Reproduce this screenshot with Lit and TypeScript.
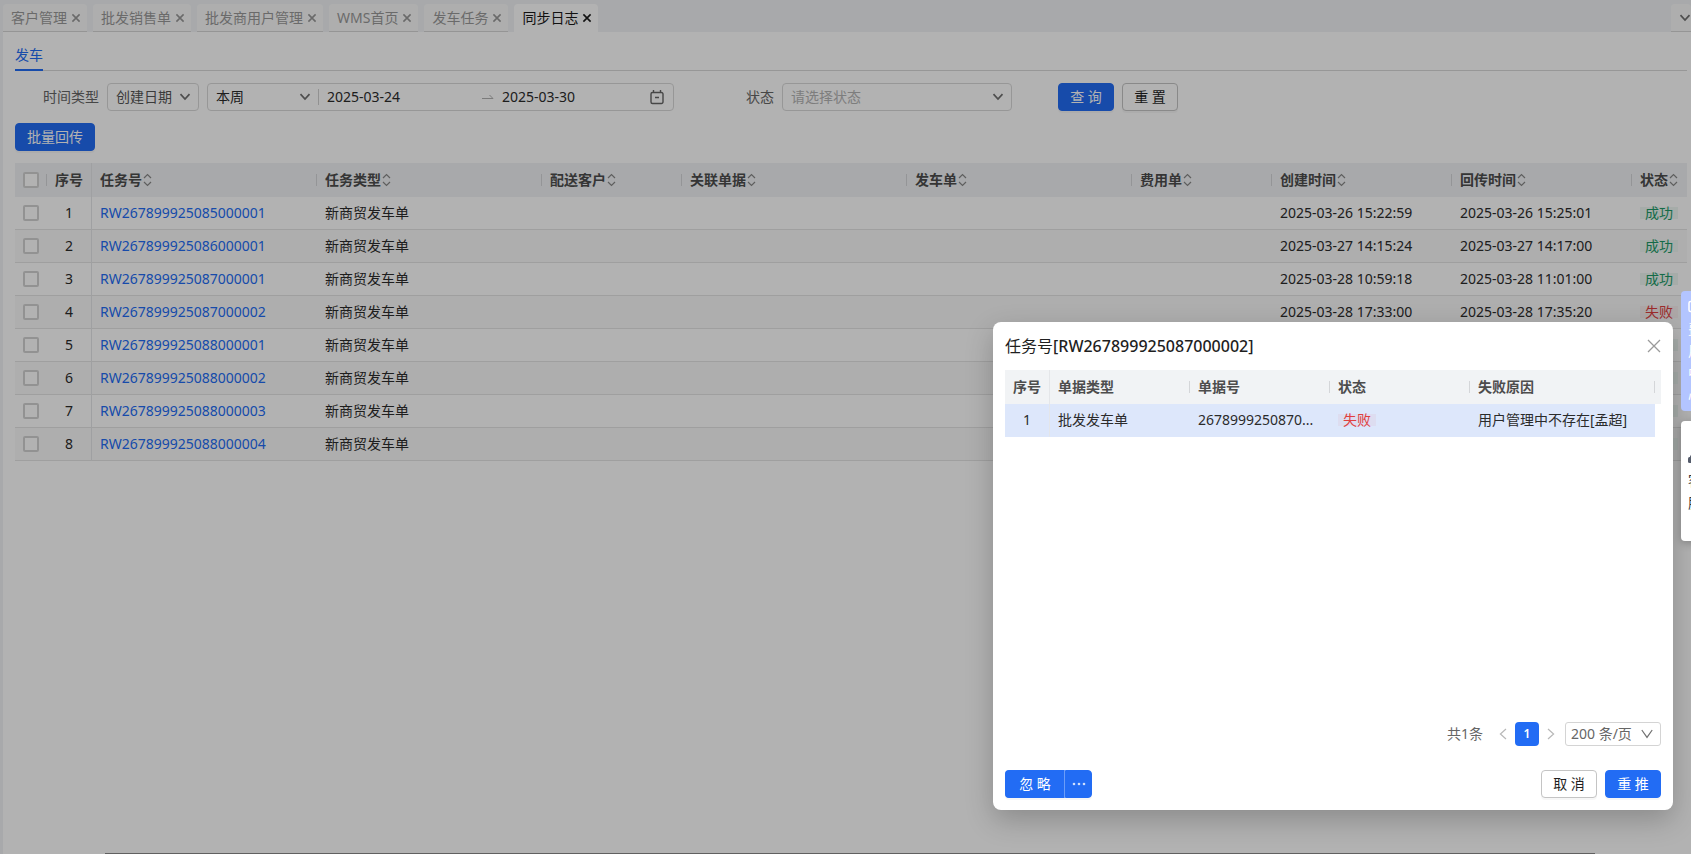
import { LitElement, html, svg, css, nothing } from "lit";
import { customElement, state } from "lit/decorators.js";
import { classMap } from "lit/directives/class-map.js";

interface Task {
  no: string;
  created: string;
  returned: string;
  ok: boolean;
}

const TABS = ["客户管理", "批发销售单", "批发商用户管理", "WMS首页", "发车任务", "同步日志"];

const COLUMNS = ["任务号", "任务类型", "配送客户", "关联单据", "发车单", "费用单", "创建时间", "回传时间", "状态"];

const TASKS: Task[] = [
  { no: "RW267899925085000001", created: "2025-03-26 15:22:59", returned: "2025-03-26 15:25:01", ok: true },
  { no: "RW267899925086000001", created: "2025-03-27 14:15:24", returned: "2025-03-27 14:17:00", ok: true },
  { no: "RW267899925087000001", created: "2025-03-28 10:59:18", returned: "2025-03-28 11:01:00", ok: true },
  { no: "RW267899925087000002", created: "2025-03-28 17:33:00", returned: "2025-03-28 17:35:20", ok: false },
  { no: "RW267899925088000001", created: "", returned: "", ok: true },
  { no: "RW267899925088000002", created: "", returned: "", ok: true },
  { no: "RW267899925088000003", created: "", returned: "", ok: true },
  { no: "RW267899925088000004", created: "", returned: "", ok: true },
];

const chevron = html`<svg class="chevron" viewBox="0 0 12 8" width="12" height="8" aria-hidden="true">
  ${svg`<path d="M1.5 1.2 6 6 10.5 1.2" fill="none" stroke="currentColor" stroke-width="1.7" />`}
</svg>`;

const thinChevron = html`<svg class="chevron" viewBox="0 0 12 10" width="12" height="10" aria-hidden="true">
  ${svg`<path d="M.8 1 6 8.4 11.2 1" fill="none" stroke="currentColor" stroke-width="1.2" />`}
</svg>`;

const cross = html`<svg viewBox="0 0 10 10" width="10" height="10" aria-hidden="true">
  ${svg`<path d="M1.4 1.4 8.6 8.6M8.6 1.4 1.4 8.6" fill="none" stroke="currentColor" stroke-width="1.6" />`}
</svg>`;

const sorter = html`<svg class="sorter" viewBox="0 0 9 14" width="9" height="14" aria-hidden="true">
  ${svg`<path d="M1 5 4.5 1.5 8 5M1 9 4.5 12.5 8 9" fill="none" stroke="currentColor" stroke-width="1.2" />`}
</svg>`;

const shared = css`
  * { box-sizing: border-box; }
  button, input, select { font: inherit; color: inherit; margin: 0; }
  button { cursor: pointer; padding: 0; }
  .btn {
    height: 28px;
    min-width: 56px;
    padding: 0 11px;
    border: 1px solid #c4c4c4;
    border-radius: 4px;
    background: #fff;
    color: #1f1f1f;
    line-height: 20px;
    white-space: nowrap;
    box-shadow: 0 2px 0 rgba(0, 0, 0, 0.03);
  }
  .btn.primary { background: #226cf4; border-color: #226cf4; color: #fff; }
  .field { display: grid; align-items: center; }
  .field > * { grid-area: 1 / 1; }
  .field select {
    appearance: none;
    width: 100%;
    height: 100%;
    border: 0;
    background: none;
    outline: none;
  }
  .chevron { justify-self: end; pointer-events: none; color: #707070; }
  table { border-collapse: separate; border-spacing: 0; table-layout: fixed; width: 100%; }
  th, td { padding: 0 8px; text-align: left; white-space: nowrap; overflow: hidden; }
  th {
    height: 34px;
    font-weight: 600;
    color: #4d4d4d;
    background: #f1f3f5 linear-gradient(#d4d6d9, #d4d6d9) no-repeat right center / 1px 12px;
  }
  td { height: 33px; border-bottom: 1px solid #e4e4e4; color: #2b2b2b; text-overflow: ellipsis; }
  .num { text-align: center; }
  th.num, td.num { border-right: 1px solid #e4e6e9; background-image: none; }
  .tag { display: inline-block; height: 12px; line-height: 12px; padding: 0 5px; color: #1d9a68; background: #eef7f3; }
  .tag.fail { color: #e0403f; background: rgba(224, 64, 63, 0.06); }
`;

@customElement("sync-dialog")
export class SyncDialog extends LitElement {
  static styles = [
    shared,
    css`
      :host {
        display: flex;
        flex-direction: column;
        width: 680px;
        padding: 0 12px 12px;
        border-radius: 8px;
        background: #fff;
        box-shadow: 0 10px 28px rgba(0, 0, 0, 0.22);
      }
      header { display: flex; align-items: center; justify-content: space-between; height: 48px; }
      h2 { margin: 0; font-size: 16px; line-height: 24px; font-weight: 400; color: #1f1f1f; }
      h2 b { font-weight: 500; }
      .close { display: flex; border: 0; background: none; color: #9a9a9a; }
      .scroll { min-height: 340px; background: linear-gradient(#f1f3f5, #f1f3f5) no-repeat 0 0 / 100% 34px; padding-right: 6px; }
      tbody td { background: #dde7fb; border-bottom-color: #dde7fb; }
      .pager { display: flex; align-items: center; justify-content: flex-end; height: 24px; margin-top: 12px; color: #666; }
      .arrow { display: flex; justify-content: center; width: 24px; border: 0; background: none; color: #b8b8b8; }
      .total { margin-right: 8px; }
      .page { width: 24px; height: 24px; border: 0; border-radius: 4px; background: #226cf4; color: #fff; font-size: 12px; font-weight: 600; line-height: 24px; }
      .size { width: 96px; height: 24px; margin-left: 2px; border: 1px solid #d4d4d4; border-radius: 3px; }
      .size select { padding: 0 5px; }
      .size .chevron { margin-right: 7px; }
      footer { display: flex; align-items: center; gap: 8px; margin-top: 24px; }
      .split { display: flex; margin-right: auto; }
      .split .btn:first-child { width: 60px; border-radius: 4px 0 0 4px; border-right-color: #6b9df8; }
      .split .more { display: grid; place-items: center; min-width: 0; width: 27px; padding: 0; border-radius: 0 4px 4px 0; }
    `,
  ];

  render() {
    return html`
      <header>
        <h2>任务号<b>[RW267899925087000002]</b></h2>
        <button class="close" aria-label="关闭">
          <svg viewBox="0 0 14 14" width="14" height="14">
            <path d="M1 1 13 13M13 1 1 13" fill="none" stroke="currentColor" stroke-width="1.3" />
          </svg>
        </button>
      </header>
      <div class="scroll">
        <table>
          <colgroup>
            <col width="45" /><col width="140" /><col width="140" /><col width="140" /><col />
          </colgroup>
          <thead>
            <tr>
              <th class="num">序号</th><th>单据类型</th><th>单据号</th><th>状态</th><th>失败原因</th>
            </tr>
          </thead>
          <tbody>
            <tr>
              <td class="num">1</td>
              <td>批发发车单</td>
              <td>2678999250870...</td>
              <td><span class="tag fail">失败</span></td>
              <td>用户管理中不存在[孟超]</td>
            </tr>
          </tbody>
        </table>
      </div>
      <div class="pager">
        <span class="total">共1条</span>
        <button class="arrow" aria-label="上一页">
          <svg viewBox="0 0 8 12" width="8" height="12"><path d="M7 1 1.4 6 7 11" fill="none" stroke="currentColor" stroke-width="1.2" /></svg>
        </button>
        <button class="page">1</button>
        <button class="arrow" aria-label="下一页">
          <svg viewBox="0 0 8 12" width="8" height="12"><path d="M1 1 6.6 6 1 11" fill="none" stroke="currentColor" stroke-width="1.2" /></svg>
        </button>
        <div class="field size">
          <select aria-label="每页条数"><option>200 条/页</option></select>
          ${thinChevron}
        </div>
      </div>
      <footer>
        <div class="split">
          <button class="btn primary">忽 略</button>
          <button class="btn primary more" aria-label="更多">
            <svg viewBox="0 0 14 4" width="14" height="4" fill="#cfdffd">
              <circle cx="2" cy="2" r="1.3" /><circle cx="7" cy="2" r="1.3" /><circle cx="12" cy="2" r="1.3" />
            </svg>
          </button>
        </div>
        <button class="btn">取 消</button>
        <button class="btn primary">重 推</button>
      </footer>
    `;
  }
}

@customElement("app-root")
export class AppRoot extends LitElement {
  @state() private active = "同步日志";

  static styles = [
    shared,
    css`
      :host {
        display: block;
        position: relative;
        min-height: 100vh;
        overflow: hidden;
        font: 14px/22px "Noto Sans", "Noto Sans CJK SC", sans-serif;
        color: #333;
        background: #f1f3f5;
      }
      .page { display: flex; flex-direction: column; min-height: 100vh; padding-left: 3px; }
      .tabs { display: flex; align-items: flex-end; gap: 6px; height: 32px; }
      .tab {
        display: flex;
        align-items: center;
        gap: 4px;
        height: 28px;
        padding: 0 6px 0 8px;
        border: 0;
        border-bottom: 1px solid #d6d6d6;
        border-radius: 4px 4px 0 0;
        background: #fafafa;
        color: #999;
        line-height: 22px;
        white-space: nowrap;
      }
      .tab.on { background: #fff; color: #1a1a1a; border-bottom-color: #fff; }
      .tab.list { width: 20px; margin-left: auto; color: #888; }
      .tab.list svg { flex: none; }
      main { flex: 1; padding: 12px 4px 0 12px; background: #fff; }
      .subtabs { display: flex; height: 27px; border-bottom: 1px solid #d9d9d9; }
      .subtabs a { height: 27px; border-bottom: 2px solid #226cf4; color: #226cf4; text-decoration: none; }
      .filters { display: flex; align-items: center; height: 28px; margin: 12px 0; padding-left: 28px; }
      .filters label { margin-right: 8px; color: #666; white-space: nowrap; }
      .box { height: 28px; border: 1px solid #d9d9d9; border-radius: 4px; }
      .box select { padding: 0 8px; }
      .box .chevron { margin-right: 7px; }
      .kind { width: 92px; margin-right: 8px; color: #555; }
      .range { display: flex; align-items: center; width: 467px; color: #2b2b2b; }
      .range .field {
        width: 111px;
        height: 26px;
        background: linear-gradient(#d0d0d0, #d0d0d0) no-repeat right center / 1px 16px;
      }
      .range .field .chevron { margin-right: 8px; }
      .range input { flex: 1; min-width: 0; border: 0; outline: 0; background: none; padding: 0 8px; }
      .range input.end { flex: none; width: 155px; }
      .range .calendar { margin-right: 8px; }
      .status { width: 230px; color: #b4b4b4; margin-right: 46px; }
      .filters .gap { margin-left: 72px; }
      .filters .btn + .btn { margin-left: 8px; }
      .list { margin-top: 12px; }
      .list th:last-child { background-image: none; }
      input[type="checkbox"] { appearance: none; display: block; width: 16px; height: 16px; border: 2px solid #d2d2d2; border-radius: 2px; background: #fff; }
      .sorter { margin-left: 1px; vertical-align: -2px; color: #888; }
      tr:nth-child(even) td { background-color: #fafafa; }
      td a { color: #226cf4; text-decoration: none; }
      .taskbar { height: 1px; margin: 0 96px 0 102px; background: #8a8a8a; }
      .foot { background: #fff; }
      .mask { position: absolute; inset: 0; background: rgba(0, 0, 0, 0.3); }
      sync-dialog { position: absolute; right: 18px; bottom: 44px; }
      .dock { position: absolute; top: 291px; left: calc(100% - 10px); display: grid; gap: 10px; }
      .dock button {
        display: flex;
        flex-direction: column;
        align-items: center;
        justify-content: center;
        width: 28px;
        height: 120px;
        border: 0;
        border-radius: 4px 0 0 4px;
        background: #b3c5ff;
        color: #fff;
        white-space: nowrap;
      }
      .dock button + button { background: #fff; color: #333; box-shadow: 0 2px 8px rgba(0, 0, 0, 0.25); }
      .dock svg { margin: 4px 0; flex: none; }
      .dock span { width: 14px; line-height: 22px; white-space: normal; }
    `,
  ];

  private row(t: Task, i: number) {
    return html`<tr>
      <td><input type="checkbox" aria-label=${"选择 " + t.no} /></td>
      <td class="num">${i + 1}</td>
      <td><a href="#">${t.no}</a></td>
      <td>新商贸发车单</td>
      <td></td><td></td><td></td><td></td>
      <td>${t.created || nothing}</td>
      <td>${t.returned || nothing}</td>
      <td><span class=${classMap({ tag: true, fail: !t.ok })}>${t.ok ? "成功" : "失败"}</span></td>
    </tr>`;
  }

  render() {
    return html`
      <div class="page">
        <nav class="tabs">
          ${TABS.map(
            (t) => html`<button class=${classMap({ tab: true, on: t === this.active })} @click=${() => (this.active = t)}>
              ${t}${cross}
            </button>`
          )}
          <button class="tab list" aria-label="全部标签">${chevron}</button>
        </nav>
        <main>
          <div class="subtabs"><a href="#">发车</a></div>
          <div class="filters">
            <label for="kind">时间类型</label>
            <div class="field box kind">
              <select id="kind"><option>创建日期</option></select>
              ${chevron}
            </div>
            <div class="box range">
              <div class="field">
                <select aria-label="时间范围"><option>本周</option></select>
                ${chevron}
              </div>
              <input aria-label="开始日期" value="2025-03-24" />
              <svg viewBox="0 0 12 6" width="12" height="6" aria-hidden="true">
                <path d="M0 4.5H11L7.5 1" fill="none" stroke="#b0b0b0" />
              </svg>
              <input class="end" aria-label="结束日期" value="2025-03-30" />
              <svg class="calendar" viewBox="0 0 16 16" width="16" height="16" aria-hidden="true">
                <path d="M3.5 3.5h9a1.5 1.5 0 0 1 1.5 1.5v8a1.5 1.5 0 0 1-1.5 1.5h-9A1.5 1.5 0 0 1 2 13V5a1.5 1.5 0 0 1 1.5-1.5zM4.5 1v3M11.5 1v3M6 8.5h4" fill="none" stroke="#666" stroke-width="1.4" />
              </svg>
            </div>
            <label class="gap" for="status">状态</label>
            <div class="field box status">
              <select id="status"><option>请选择状态</option></select>
              ${chevron}
            </div>
            <button class="btn primary">查 询</button>
            <button class="btn">重 置</button>
          </div>
          <button class="btn primary">批量回传</button>
          <table class="list">
            <colgroup>
              <col width="32" /><col width="45" /><col width="225" /><col width="225" /><col width="140" />
              <col width="225" /><col width="225" /><col width="140" /><col width="180" /><col width="180" /><col />
            </colgroup>
            <thead>
              <tr>
                <th><input type="checkbox" aria-label="全选" /></th>
                <th class="num">序号</th>
                ${COLUMNS.map((c) => html`<th>${c}${sorter}</th>`)}
              </tr>
            </thead>
            <tbody>
              ${TASKS.map((t, i) => this.row(t, i))}
            </tbody>
          </table>
        </main>
        <div class="foot"><div class="taskbar"></div></div>
      </div>
      <div class="mask"></div>
      <sync-dialog role="dialog"></sync-dialog>
      <aside class="dock">
        <button>
          <svg viewBox="0 0 14 14" width="14" height="14"><rect x="1" y="1.5" width="12" height="10" rx="1.5" fill="none" stroke="currentColor" stroke-width="1.5" /></svg>
          <span>费用中心</span>
        </button>
        <button>
          <svg viewBox="0 0 14 14" width="14" height="14"><path d="M2.5 6a4.5 4.5 0 0 1 9 0" fill="none" stroke="#555c6b" stroke-width="1.4" /><rect x="0" y="5" width="4" height="6" rx="1.5" fill="#555c6b" /><rect x="10" y="5" width="4" height="6" rx="1.5" fill="#555c6b" /></svg>
          <span>客服</span>
        </button>
      </aside>
    `;
  }
}
